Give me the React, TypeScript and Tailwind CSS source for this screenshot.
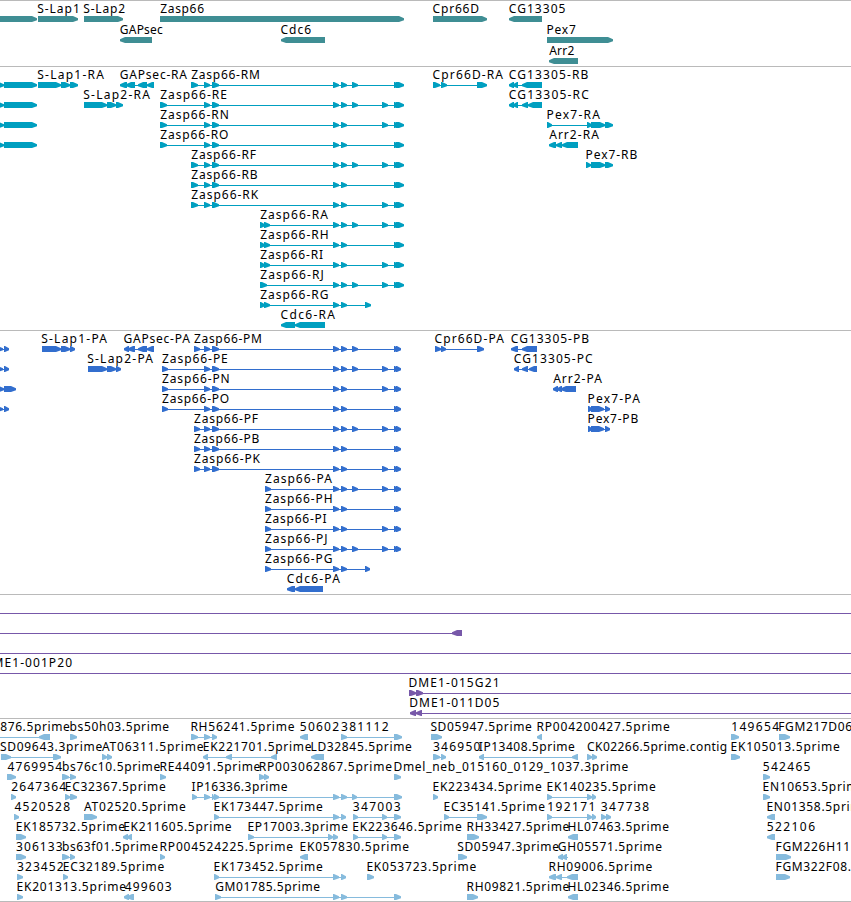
import React from "react";

type Exon = [number, number];

interface Feature {
  row: number;
  /** 1 = forward strand, -1 = reverse strand */
  dir: 1 | -1;
  exons: Exon[];
  label?: string;
  labelX?: number;
  labelEnd?: number;
  /** extent of the connector when it runs past the exons */
  span?: Exon;
}

interface Track {
  name: string;
  color: string;
  pitch: number;
  heightClass: string;
  height: number;
  features: Feature[];
}

const WIDTH = 851;

const f = (
  row: number,
  label: string,
  labelX: number,
  labelEnd: number,
  dir: 1 | -1,
  exons: Exon[],
  span?: Exon
): Feature => ({ row, label, labelX, labelEnd, dir, exons, span });

const bare = (row: number, dir: 1 | -1, exons: Exon[], span?: Exon): Feature => ({
  row,
  dir,
  exons,
  span,
});

const genes: Feature[] = [
  bare(0, 1, [[-10, 37]]),
  f(0, "S-Lap1", 37.2, 79.8, 1, [[38, 78]]),
  f(0, "S-Lap2", 83.2, 125.2, 1, [[84, 123]]),
  f(0, "Zasp66", 160.2, 204, 1, [[160, 404]]),
  f(0, "Cpr66D", 432.6, 479, 1, [[433, 487]]),
  f(0, "CG13305", 508.8, 565.4, -1, [[509, 542]]),
  f(1, "GAPsec", 119.8, 162.8, -1, [[120, 152]]),
  f(1, "Cdc6", 280.6, 311, -1, [[281, 325]]),
  f(1, "Pex7", 546.6, 575.8, 1, [[547, 613]]),
  f(2, "Arr2", 549.2, 574.4, -1, [[549, 578]]),
];

const mid: Exon[] = [[333, 339], [341, 347]];
const e352: Exon = [352, 358];
const e382: Exon = [382, 388];
const tail: Exon[] = [[394, 399], [396, 404]];
const up: Exon[] = [[204, 210], [212, 219]];
const two: Exon[] = [[260, 265], [264, 270]];

const transcripts: Feature[] = [
  ...[0, 1, 2, 3].map((r) => bare(r, 1, [[-4, 4], [4, 37]])),
  f(0, "S-Lap1-RA", 37.2, 104, 1, [[38, 61], [61, 70], [70, 78]]),
  f(0, "GAPsec-RA", 119.8, 187, -1, [[120, 127], [126, 135], [138, 147], [147, 154]]),
  f(1, "S-Lap2-RA", 83.2, 150, 1, [[84, 107], [107, 116], [116, 123]]),
  f(0, "Zasp66-RM", 191.2, 259.8, 1, [[191, 198], ...up, ...mid, e352, ...tail]),
  f(1, "Zasp66-RE", 160.2, 227, 1, [[160, 167], ...up, ...mid, e352, e382, ...tail]),
  f(2, "Zasp66-RN", 160.2, 228.8, 1, [[160, 167], ...up, ...mid, e382, ...tail]),
  f(3, "Zasp66-RO", 160.2, 228.4, 1, [[160, 167], ...up, ...mid, ...tail]),
  f(4, "Zasp66-RF", 191.2, 256, 1, [[191, 198], ...up, ...mid, e352, e382, ...tail]),
  f(5, "Zasp66-RB", 191.2, 257.6, 1, [[191, 198], ...up, ...mid, ...tail]),
  f(6, "Zasp66-RK", 191.2, 258.2, 1, [[191, 198], ...up, ...mid, e382, ...tail]),
  f(7, "Zasp66-RA", 260.2, 327.8, 1, [...two, ...mid, e352, e382, ...tail]),
  f(8, "Zasp66-RH", 260.2, 328.6, 1, [...two, ...mid, ...tail]),
  f(9, "Zasp66-RI", 260.2, 323.2, 1, [...two, ...mid, e382, ...tail]),
  f(10, "Zasp66-RJ", 260.2, 323.8, 1, [[260, 267], ...mid, e352, e382, ...tail]),
  f(11, "Zasp66-RG", 260.2, 328.4, 1, [...two, ...mid, [365, 371]]),
  f(12, "Cdc6-RA", 280.6, 335, -1, [[281, 295], [295, 325]]),
  f(0, "Cpr66D-RA", 432.6, 503, 1, [[433, 440], [441, 447], [477, 487]]),
  f(0, "CG13305-RB", 508.8, 588.3, -1, [[509, 514], [513, 518], [522, 542]]),
  f(1, "CG13305-RC", 508.8, 588.8, -1, [[509, 514], [513, 518], [522, 528], [528, 542]]),
  f(2, "Pex7-RA", 546.6, 599.8, 1, [[547, 552], [587, 592], [591, 605], [605, 613]]),
  f(3, "Arr2-RA", 549.2, 598.8, -1, [[549, 556], [556, 562], [562, 578]]),
  f(4, "Pex7-RB", 585.6, 637.3, 1, [[586, 591], [591, 605], [605, 613]]),
];

const ptail: Exon[] = [[394, 398], [396, 401]];

const proteins: Feature[] = [
  ...[0, 1, 3].map((r) => bare(r, 1, [[-3, 3], [4, 9]])),
  bare(2, 1, [[-3, 4], [4, 16]]),
  f(0, "S-Lap1-PA", 41.2, 107, 1, [[42, 61], [61, 70], [70, 75]]),
  f(0, "GAPsec-PA", 123.6, 189.8, -1, [[124, 129], [128, 135], [138, 147], [147, 154]]),
  f(1, "S-Lap2-PA", 87.2, 153, 1, [[88, 107], [107, 116], [116, 121]]),
  f(0, "Zasp66-PM", 194, 261.8, 1, [[194, 200], ...up, ...mid, e352, ...ptail]),
  f(1, "Zasp66-PE", 162, 227.8, 1, [[162, 168], ...up, ...mid, e352, e382, ...ptail]),
  f(2, "Zasp66-PN", 162, 229.7, 1, [[162, 168], ...up, ...mid, e382, ...ptail]),
  f(3, "Zasp66-PO", 162, 229.2, 1, [[162, 168], ...up, ...mid, ...ptail]),
  f(4, "Zasp66-PF", 194, 258, 1, [[194, 200], ...up, ...mid, e352, e382, ...ptail]),
  f(5, "Zasp66-PB", 194, 259.3, 1, [[194, 200], ...up, ...mid, ...ptail]),
  f(6, "Zasp66-PK", 194, 260, 1, [[194, 200], ...up, ...mid, e382, ...ptail]),
  f(7, "Zasp66-PA", 265, 331.8, 1, [[265, 271], ...mid, e352, e382, ...ptail]),
  f(8, "Zasp66-PH", 265, 332.6, 1, [[265, 271], ...mid, ...ptail]),
  f(9, "Zasp66-PI", 265, 326.6, 1, [[265, 271], ...mid, e382, ...ptail]),
  f(10, "Zasp66-PJ", 265, 327.6, 1, [[265, 271], ...mid, e352, e382, ...ptail]),
  f(11, "Zasp66-PG", 265, 332.4, 1, [[265, 271], ...mid, [365, 370]]),
  f(12, "Cdc6-PA", 286.8, 339.8, -1, [[287, 295], [295, 323]]),
  f(0, "Cpr66D-PA", 434.6, 503.8, 1, [[435, 441], [441, 446], [477, 484]]),
  f(0, "CG13305-PB", 510.8, 589, -1, [[511, 518], [522, 537]]),
  f(1, "CG13305-PC", 513.8, 592.7, -1, [[514, 519], [522, 528], [529, 537]]),
  f(2, "Arr2-PA", 553.2, 601.8, -1, [[553, 558], [557, 562], [561, 576]]),
  f(3, "Pex7-PA", 587.6, 639.8, 1, [[588, 592], [591, 604], [605, 610]]),
  f(4, "Pex7-PB", 587.6, 638.2, 1, [[588, 592], [591, 604], [605, 610]]),
];

const bacs: Feature[] = [
  bare(0, 1, [], [0, WIDTH]),
  bare(1, -1, [[452, 462]], [0, 462]),
  bare(2, 1, [], [0, WIDTH]),
  f(3, "DME1-001P20", -17.3, 72, 1, [], [0, WIDTH]),
  f(4, "DME1-015G21", 408.4, 499.5, 1, [[409, 416], [416, 423]], [409, WIDTH]),
  f(5, "DME1-011D05", 409.3, 499.3, -1, [[410, 416], [416, 422]], [410, WIDTH]),
];

const ests: Feature[] = [
  f(0, "876.5prime", 0.2, 69.8, -1, [[39, 50]], [0, 50]),
  f(0, "bs50h03.5prime", 69.6, 169, 1, [[70, 77]]),
  f(0, "RH56241.5prime", 190.4, 294.5, 1, [[191, 198], [204, 210], [212, 217]]),
  f(0, "50602", 299.8, 339, -1, [[300, 308]]),
  f(0, "381112", 341, 388.6, 1, [[341, 347], [394, 402]]),
  f(0, "SD05947.5prime", 430.4, 531.8, 1, [[431, 442]]),
  f(0, "RP004200427.5prime", 536.6, 669.8, -1, [[537, 542]]),
  f(0, "149654", 731.2, 779, 1, [[731, 739]]),
  f(0, "FGM217D06", 778.3, 852, 1, [[779, 790]]),

  f(1, "SD09643.3prime", 0, 102.2, 1, [[1, 11], [53, 61]]),
  f(1, "AT06311.5prime", 102, 203.5, 1, [[102, 107], [107, 112]]),
  f(1, "EK221701.5prime", 202.8, 311.5, -1, [[203, 208], [226, 232], [271, 277]]),
  f(1, "LD32845.5prime", 310.5, 411.8, -1, [[311, 324]]),
  f(1, "346950", 433, 480.4, 1, [[433, 440], [441, 446]]),
  f(1, "IP13408.5prime", 478.8, 574.8, -1, [[479, 484], [572, 578]]),
  f(1, "CK02266.5prime.contig", 587, 727.2, 1, [[587, 592], [592, 597]]),
  f(1, "EK105013.5prime", 730.6, 839.8, 1, [[731, 740]]),

  f(2, "4769954", 7.4, 62.2, 1, [[7, 16]]),
  f(2, "bs76c10.5prime", 62, 160.2, 1, [[62, 69], [70, 76]]),
  f(2, "RE44091.5prime", 159.6, 260.4, 1, [[160, 166]]),
  f(2, "RP003062867.5prime", 258.8, 392, 1, [[259, 265], [264, 269]]),
  f(2, "Dmel_neb_015160_0129_1037.3prime", 393.4, 628.2, 1, [[394, 401]]),
  f(2, "542465", 762.8, 810.4, 1, [[763, 770]]),

  f(3, "2647364", 11.2, 66, 1, [[11, 16]]),
  f(3, "EC32367.5prime", 64.8, 165.8, 1, [[65, 70], [70, 77]]),
  f(3, "IP16336.3prime", 191.6, 287.5, 1, [[192, 197], [204, 210], [212, 214], [214, 219], [333, 339], [341, 347], [352, 357], [394, 402]]),
  f(3, "EK223434.5prime", 432.5, 541.8, 1, [[433, 438]]),
  f(3, "EK140235.5prime", 546.6, 655.8, 1, [[547, 552], [587, 592], [592, 596]]),
  f(3, "EN10653.5prime", 762.6, 865, 1, [[763, 770]]),

  f(4, "4520528", 14.4, 70, 1, [[14, 19]]),
  f(4, "AT02520.5prime", 84, 185.8, 1, [[84, 97]]),
  f(4, "EK173447.5prime", 213.5, 322.8, 1, [[214, 219], [333, 339], [341, 346]]),
  f(4, "347003", 352.8, 400.6, 1, [[353, 358], [382, 387], [394, 401]]),
  f(4, "EC35141.5prime", 443.5, 545, 1, [[444, 449], [477, 487]]),
  f(4, "192171", 547.2, 595.4, 1, [[547, 552], [587, 592], [592, 596]]),
  f(4, "347738", 600.8, 649.2, 1, [[601, 606], [606, 611]]),
  f(4, "EN01358.5prime", 766.5, 869, -1, [[767, 775]]),

  f(5, "EK185732.5prime", 15.7, 125, 1, [[16, 26]]),
  f(5, "EK211605.5prime", 123.2, 231.6, -1, [[123, 128], [127, 132]]),
  f(5, "EP17003.3prime", 247.5, 348, 1, [[248, 254], [328, 333], [333, 338]]),
  f(5, "EK223646.5prime", 352.3, 461.8, 1, [[353, 358], [382, 387], [394, 401]]),
  f(5, "RH33427.5prime", 466.6, 569.4, 1, [[467, 479]]),
  f(5, "HL07463.5prime", 567.5, 669, -1, [[568, 578]]),
  f(5, "522106", 766.8, 815, -1, [[767, 775]]),

  f(6, "306133", 16, 62.6, 1, [[16, 26]]),
  f(6, "bs63f01.5prime", 62, 158, 1, [[62, 69], [70, 75]]),
  f(6, "RP004524225.5prime", 159.6, 293, 1, [[160, 165]]),
  f(6, "EK057830.5prime", 299.5, 409, -1, [[300, 308]]),
  f(6, "SD05947.3prime", 457.2, 559, 1, [[458, 467]]),
  f(6, "GH05571.5prime", 557.8, 662, -1, [[558, 563], [562, 567]], [558, 568]),
  f(6, "FGM226H11", 775.5, 850.2, 1, [[776, 791]]),

  f(7, "323452", 17, 63.6, 1, [[17, 23]]),
  f(7, "EC32189.5prime", 62.8, 164.2, 1, [[63, 68]]),
  f(7, "EK173452.5prime", 213.5, 322.8, 1, [[214, 219], [333, 339], [341, 346]]),
  f(7, "EK053723.5prime", 366.4, 476.2, 1, [[367, 374]]),
  f(7, "RH09006.5prime", 548.5, 652.2, -1, [[549, 556], [556, 562], [567, 578]]),
  f(7, "FGM322F08.", 775.5, 851, 1, [[776, 790]]),

  f(8, "EK201313.5prime", 16.5, 126, 1, [[17, 23]]),
  f(8, "499603", 124.7, 171.5, -1, [[124, 129], [127, 134]]),
  f(8, "GM01785.5prime", 215.2, 320, 1, [[215, 221], [333, 339], [341, 347], [394, 401]]),
  f(8, "RH09821.5prime", 466.6, 569.4, 1, [[467, 478]]),
  f(8, "HL02346.5prime", 567.5, 669, -1, [[568, 578]]),
];

const tracks: Track[] = [
  { name: "Genes", color: "#3f8e94", pitch: 21, heightClass: "h-[66px]", height: 65, features: genes },
  { name: "Transcripts", color: "#009fc0", pitch: 20, heightClass: "h-[264px]", height: 263, features: transcripts },
  { name: "Proteins", color: "#326ece", pitch: 20, heightClass: "h-[264px]", height: 263, features: proteins },
  { name: "BACs", color: "#7758a9", pitch: 20, heightClass: "h-[124px]", height: 123, features: bacs },
  { name: "ESTs", color: "#86bbdd", pitch: 20, heightClass: "h-[183px]", height: 182, features: ests },
];

function exonPoints([s, e]: Exon, dir: 1 | -1, y: number): string {
  const head = Math.min(6, e - s);
  const t = y + 2.2;
  const u = y + 4.2;
  const b = y + 6;
  if (dir === 1) {
    const n = e - head;
    return `${s},${y} ${n + 1},${y} ${e},${t} ${e},${u} ${n + 1},${b} ${s},${b}`;
  }
  const n = s + head;
  return `${e},${y} ${n - 1},${y} ${s},${t} ${s},${u} ${n - 1},${b} ${e},${b}`;
}

function Glyph({ feature, pitch }: { feature: Feature; pitch: number }) {
  const top = feature.row * pitch + 15;
  const { exons, dir } = feature;
  const span: Exon = feature.span ?? [exons[0][0], exons[exons.length - 1][1]];
  return (
    <g>
      <rect x={span[0]} y={top + 3} width={span[1] - span[0]} height={1} shapeRendering="crispEdges" />
      {exons.map((e, i) => (
        <polygon key={i} points={exonPoints(e, dir, top)} />
      ))}
    </g>
  );
}

function TrackPanel({ track }: { track: Track }) {
  return (
    <section aria-label={track.name} className={`w-full overflow-hidden border-t border-[#bababa] ${track.heightClass}`}>
      <svg width={WIDTH} height={track.height} className="block">
        <g fill={track.color}>
          {track.features.map((feat, i) => (
            <Glyph key={i} feature={feat} pitch={track.pitch} />
          ))}
        </g>
        <g className="fill-black font-['Noto_Sans',sans-serif] text-[12px]">
          {track.features.map((feat, i) =>
            feat.label ? (
              <text
                key={i}
                x={feat.labelX}
                y={feat.row * track.pitch + 12}
                textLength={feat.labelEnd! - feat.labelX!}
                lengthAdjust="spacing"
              >
                {feat.label}
              </text>
            ) : null
          )}
        </g>
      </svg>
    </section>
  );
}

export default function App() {
  return (
    <main className="flex h-[902px] w-[851px] flex-col overflow-hidden border-b border-[#bababa] bg-white">
      {tracks.map((t) => (
        <TrackPanel key={t.name} track={t} />
      ))}
    </main>
  );
}
